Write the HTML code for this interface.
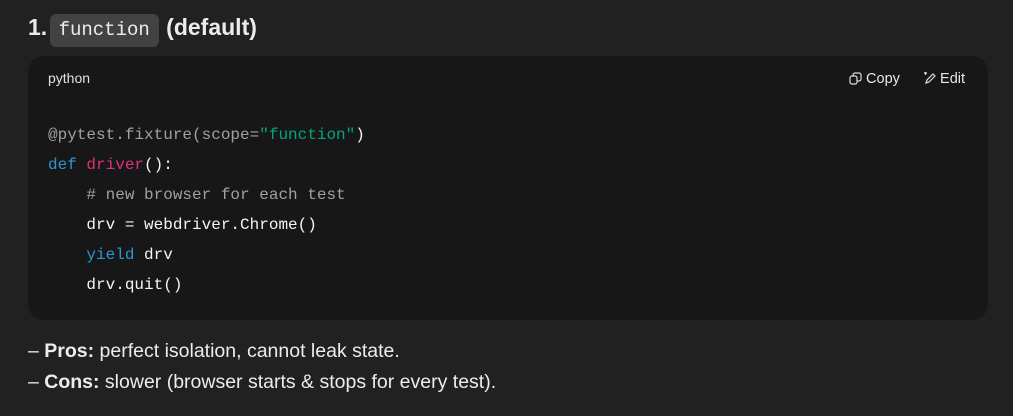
<!DOCTYPE html><html><head><style>
body{margin:0;background:#212121;width:1013px;height:416px;overflow:hidden;font-family:"Liberation Sans",sans-serif;color:#ececec}
h3{position:absolute;left:28px;top:8px;margin:0;font-size:23px;font-weight:bold;line-height:38px}
.pill{display:inline-block;background:#424242;border-radius:6px;font-family:"Liberation Mono",monospace;font-weight:normal;font-size:19px;padding:0 9px;line-height:33px;margin:0 1px 0 -4px}
.code{position:absolute;left:28px;top:56px;width:960px;height:264px;background:#171717;border-radius:16px}
.lang{position:absolute;left:20px;top:14px;font-size:14px;color:#e0e0e0}
.act{position:absolute;top:15px;font-size:14.5px;color:#e8e8e8}
pre{position:absolute;left:20px;top:64px;margin:0;font-family:"Liberation Mono",monospace;font-size:16px;line-height:30px;color:#f4f4f4}
.g{color:#a0a0a0}.s{color:#00a67d}.k{color:#2e95d3}.f{color:#df3079}
p{position:absolute;left:28px;margin:0;font-size:19.5px;color:#ececec}
</style></head><body>
<h3>1. <span class="pill">function</span> (default)</h3>
<div class="code">
<div class="lang">python</div>
<div class="act" style="left:821px"><svg width="13" height="13" viewBox="0 0 13 13" style="vertical-align:-2px" fill="none" stroke="#ddd" stroke-width="1.2"><rect x="1" y="4" width="7" height="8" rx="2"/><path d="M4 4V3a2 2 0 0 1 2-2h4a2 2 0 0 1 2 2v4a2 2 0 0 1-2 2H8"/></svg> Copy</div>
<div class="act" style="left:895px"><svg width="13" height="13" viewBox="0 0 13 13" style="vertical-align:-2px" fill="none" stroke="#ddd" stroke-width="1.2"><path d="M3 11l1-3 6-6 2 2-6 6z M1 1h3 M2.5 0v3"/></svg> Edit</div>
<pre><span class="g">@pytest.fixture(scope=</span><span class="s">"function"</span>)
<span class="k">def</span> <span class="f">driver</span>():
    <span class="g"># new browser for each test</span>
    drv = webdriver.Chrome()
    <span class="k">yield</span> drv
    drv.quit()</pre>
</div>
<p style="top:340px">– <b>Pros:</b> perfect isolation, cannot leak state.</p>
<p style="top:371px">– <b>Cons:</b> slower (browser starts &amp; stops for every test).</p>
</body></html>
